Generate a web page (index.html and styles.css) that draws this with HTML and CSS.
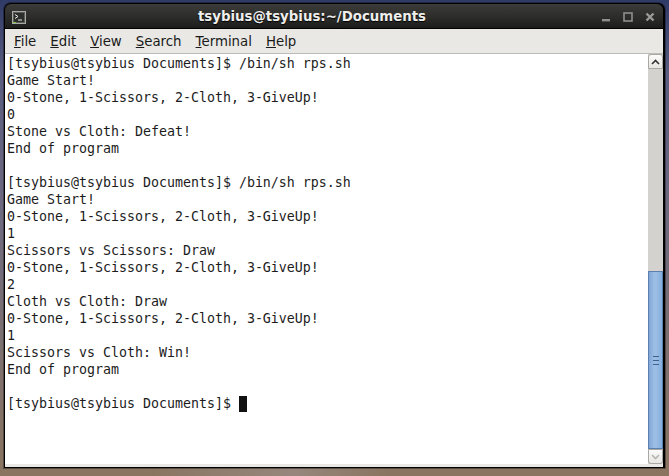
FILE: index.html
```html
<!DOCTYPE html>
<html lang="en">
<head>
<meta charset="utf-8">
<title>tsybius@tsybius:~/Documents</title>
<link rel="stylesheet" href="styles.css">
</head>
<body>
<div class="window">
  <header class="titlebar">
    <svg class="app-icon" width="14" height="13" viewBox="0 0 14 13">
      <rect x="0.5" y="0.5" width="13" height="12" fill="#5a5c58" stroke="#a8aaa6"/>
      <rect x="2" y="2" width="10" height="9" fill="#2c2e2c"/>
      <path d="M3 3.5 L6 5.5 L3 7.5" fill="none" stroke="#e8e8e8" stroke-width="1"/>
      <path d="M6 9 H10" stroke="#e8e8e8" stroke-width="1"/>
      <rect x="1" y="11" width="3" height="1" fill="#7fc34a"/>
    </svg>
    <span class="title">tsybius@tsybius:~/Documents</span>
    <div class="controls">
      <svg width="10" height="10" viewBox="0 0 10 10"><rect x="1" y="7" width="8" height="2.4" fill="#8f908d"/></svg>
      <svg width="10" height="10" viewBox="0 0 10 10"><rect x="1" y="1" width="8" height="8" fill="none" stroke="#8f908d" stroke-width="1.6"/></svg>
      <svg width="10" height="10" viewBox="0 0 10 10"><path d="M1.5 1.5 L8.5 8.5 M8.5 1.5 L1.5 8.5" stroke="#9a9b98" stroke-width="2.4"/></svg>
    </div>
  </header>
  <nav class="menubar">
    <span class="menu"><u>F</u>ile</span>
    <span class="menu"><u>E</u>dit</span>
    <span class="menu"><u>V</u>iew</span>
    <span class="menu"><u>S</u>earch</span>
    <span class="menu"><u>T</u>erminal</span>
    <span class="menu"><u>H</u>elp</span>
  </nav>
  <main class="terminal">
    <pre class="output">[tsybius@tsybius Documents]$ /bin/sh rps.sh
Game Start!
0-Stone, 1-Scissors, 2-Cloth, 3-GiveUp!
0
Stone vs Cloth: Defeat!
End of program

[tsybius@tsybius Documents]$ /bin/sh rps.sh
Game Start!
0-Stone, 1-Scissors, 2-Cloth, 3-GiveUp!
1
Scissors vs Scissors: Draw
0-Stone, 1-Scissors, 2-Cloth, 3-GiveUp!
2
Cloth vs Cloth: Draw
0-Stone, 1-Scissors, 2-Cloth, 3-GiveUp!
1
Scissors vs Cloth: Win!
End of program

[tsybius@tsybius Documents]$ <span class="cursor"> </span></pre>
    <div class="scrollbar">
      <div class="arrow arrow-up"><svg width="9" height="6" viewBox="0 0 9 6"><path d="M1 5 L4.5 1.5 L8 5" fill="none" stroke="#333" stroke-width="1.6"/></svg></div>
      <div class="trough">
        <div class="thumb"><span class="grip"></span></div>
      </div>
      <div class="arrow arrow-down"><svg width="9" height="6" viewBox="0 0 9 6"><path d="M1 1 L4.5 4.5 L8 1" fill="none" stroke="#b5b5b2" stroke-width="1.6"/></svg></div>
    </div>
  </main>
</div>
</body>
</html>
```
FILE: styles.css
```css
html, body {
  margin: 0;
  height: 100%;
}
body {
  width: 669px;
  height: 476px;
  overflow: hidden;
  box-sizing: border-box;
  padding: 3px 4px 8px 4px;
  display: flex;
  background:
    linear-gradient(95deg, rgba(0,0,0,0) 22%, rgba(170,160,165,.4) 44%, rgba(0,0,0,0) 58%) 0 100%/100% 8px no-repeat,
    linear-gradient(180deg, #2f3a66 0, #5a5d80 15%, #6e6a80 45%, #8a7560 100%);
}
.window {
  flex: 1;
  display: flex;
  flex-direction: column;
  background: #000;
  border-radius: 7px 7px 0 0;
  padding: 1px 2px 1px 1px;
  overflow: hidden;
  box-shadow: 0 0 0 1px rgba(0,0,0,.35);
}
.titlebar {
  position: relative;
  height: 24px;
  flex: none;
  display: flex;
  align-items: center;
  justify-content: center;
  padding-right: 44px;
  background: linear-gradient(180deg, #3b3b39 0, #2c2c2a 55%, #1c1c1b 100%);
  border-radius: 6px 6px 0 0;
}
.app-icon {
  position: absolute;
  left: 7px;
  top: 7px;
}
.title {
  font: bold 13.33px "DejaVu Sans", sans-serif;
  color: #eeeeec;
  text-shadow: 0 1px 1px #000;
}
.controls {
  position: absolute;
  right: 8px;
  top: 8px;
  display: flex;
  gap: 12px;
}
.controls svg {
  display: block;
}
.menubar {
  flex: none;
  height: 25px;
  display: flex;
  align-items: center;
  gap: 14px;
  padding: 1px 0 0 9px;
  margin-top: 1px;
  box-sizing: border-box;
  background: #e9e8e5;
  border-bottom: 1px solid #bcbbb7;
  font: 13.33px "DejaVu Sans", sans-serif;
  color: #1a1a1a;
}
.terminal {
  flex: 1;
  min-height: 0;
  display: flex;
  background: #fff;
  border-bottom: 3px solid #e9e8e5;
}
.output {
  flex: 1;
  margin: 0;
  padding: 1px 0 0 2px;
  font: 13.29px/17px "DejaVu Sans Mono", monospace;
  color: #1c1c1c;
}
.cursor {
  display: inline-block;
  width: 8px;
  height: 16px;
  vertical-align: -1px;
  background: #111;
}
.scrollbar {
  flex: none;
  width: 15px;
  display: flex;
  flex-direction: column;
  background: #d3d2cf;
}
.arrow {
  flex: none;
  height: 15px;
  display: flex;
  align-items: center;
  justify-content: center;
  box-sizing: border-box;
  background: linear-gradient(180deg, #fbfbfa, #e6e5e2);
  border: 1px solid #a9a8a4;
}
.arrow-up { border-radius: 3px 3px 0 0; }
.arrow-down { border-radius: 0 0 3px 3px; }
.trough {
  flex: 1;
  display: flex;
  flex-direction: column;
  justify-content: flex-end;
}
.thumb {
  height: 178px;
  box-sizing: border-box;
  display: flex;
  align-items: center;
  justify-content: center;
  background: linear-gradient(90deg, #7fa7d8, #9fc0e6 45%, #86aedd);
  border: 1px solid #5c7fae;
}
.grip {
  display: block;
  width: 6px;
  height: 7px;
  border-top: 1px solid #3f5f8f;
  border-bottom: 1px solid #3f5f8f;
  background: linear-gradient(#3f5f8f, #3f5f8f) 0 50%/100% 1px no-repeat;
}
```
